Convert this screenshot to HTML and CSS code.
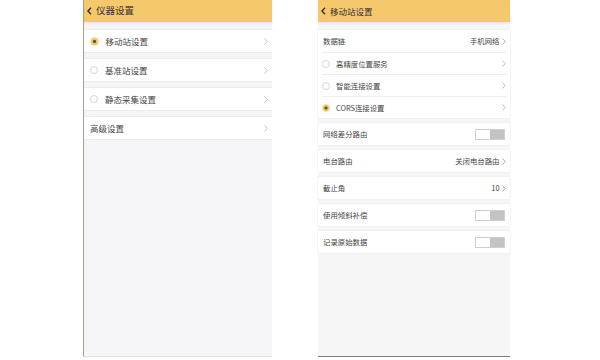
FILE: index.html
```html
<!DOCTYPE html>
<html>
<head>
<meta charset="utf-8">
<link rel="stylesheet" href="styles.css">
</head>
<body>
<div class="stage">
  <div class="phone phone-left">
    <div class="header">
      <svg class="back" width="5" height="8" viewBox="0 0 5 8"><polyline points="4,0.8 1,4 4,7.2" fill="none" stroke="#333" stroke-width="1.5"/></svg>
      <span>仪器设置</span>
    </div>
    <div class="list">
      <div class="row"><span class="radio on"></span><span class="label">移动站设置</span><span class="chev"><svg width="4" height="7" viewBox="0 0 4 7"><polyline points="0.5,0.5 3.3,3.5 0.5,6.5" fill="none" stroke="#b0b0b0" stroke-width="0.8"/></svg></span></div>
      <div class="row"><span class="radio"></span><span class="label">基准站设置</span><span class="chev"><svg width="4" height="7" viewBox="0 0 4 7"><polyline points="0.5,0.5 3.3,3.5 0.5,6.5" fill="none" stroke="#b0b0b0" stroke-width="0.8"/></svg></span></div>
      <div class="row"><span class="radio"></span><span class="label">静态采集设置</span><span class="chev"><svg width="4" height="7" viewBox="0 0 4 7"><polyline points="0.5,0.5 3.3,3.5 0.5,6.5" fill="none" stroke="#b0b0b0" stroke-width="0.8"/></svg></span></div>
      <div class="row"><span class="label plain">高级设置</span><span class="chev"><svg width="4" height="7" viewBox="0 0 4 7"><polyline points="0.5,0.5 3.3,3.5 0.5,6.5" fill="none" stroke="#b0b0b0" stroke-width="0.8"/></svg></span></div>
    </div>
  </div>

  <div class="phone phone-right">
    <div class="header">
      <svg class="back" width="5" height="8" viewBox="0 0 5 8"><polyline points="4,0.8 1,4 4,7.2" fill="none" stroke="#333" stroke-width="1.4"/></svg>
      <span>移动站设置</span>
    </div>
    <div class="list">
      <div class="group">
        <div class="row"><span class="label plain">数据链</span><span class="value">手机网络</span><span class="chev"><svg width="4" height="7" viewBox="0 0 4 7"><polyline points="0.5,0.5 3.3,3.5 0.5,6.5" fill="none" stroke="#999" stroke-width="0.8"/></svg></span></div>
        <div class="row"><span class="radio"></span><span class="label">高精度位置服务</span><span class="chev"><svg width="4" height="7" viewBox="0 0 4 7"><polyline points="0.5,0.5 3.3,3.5 0.5,6.5" fill="none" stroke="#b0b0b0" stroke-width="0.8"/></svg></span></div>
        <div class="row"><span class="radio"></span><span class="label">智能连接设置</span><span class="chev"><svg width="4" height="7" viewBox="0 0 4 7"><polyline points="0.5,0.5 3.3,3.5 0.5,6.5" fill="none" stroke="#b0b0b0" stroke-width="0.8"/></svg></span></div>
        <div class="row"><span class="radio on"></span><span class="label">CORS连接设置</span><span class="chev"><svg width="4" height="7" viewBox="0 0 4 7"><polyline points="0.5,0.5 3.3,3.5 0.5,6.5" fill="none" stroke="#b0b0b0" stroke-width="0.8"/></svg></span></div>
      </div>
      <div class="group">
        <div class="row"><span class="label plain">网络差分路由</span><span class="switch"><span class="knob"></span></span></div>
      </div>
      <div class="group">
        <div class="row"><span class="label plain">电台路由</span><span class="value">关闭电台路由</span><span class="chev"><svg width="4" height="7" viewBox="0 0 4 7"><polyline points="0.5,0.5 3.3,3.5 0.5,6.5" fill="none" stroke="#999" stroke-width="0.8"/></svg></span></div>
      </div>
      <div class="group">
        <div class="row"><span class="label plain">截止角</span><span class="value">10</span><span class="chev"><svg width="4" height="7" viewBox="0 0 4 7"><polyline points="0.5,0.5 3.3,3.5 0.5,6.5" fill="none" stroke="#999" stroke-width="0.8"/></svg></span></div>
      </div>
      <div class="group">
        <div class="row"><span class="label plain">使用倾斜补偿</span><span class="switch"><span class="knob"></span></span></div>
      </div>
      <div class="group">
        <div class="row"><span class="label plain">记录原始数据</span><span class="switch"><span class="knob"></span></span></div>
      </div>
    </div>
  </div>
</div>
</body>
</html>
```

FILE: styles.css
```css
html, body {
  margin: 0;
  padding: 0;
  background: #ffffff;
}
body {
  font-family: "Noto Sans CJK SC", "Noto Sans", sans-serif;
  color: #333;
}
.stage {
  display: flex;
  align-items: flex-start;
  padding-left: 83px;
  gap: 46px;
  height: 360px;
}
.phone {
  height: 357px;
  display: flex;
  flex-direction: column;
  box-sizing: border-box;
}
.phone-left {
  width: 189px;
  background: #f5f4f7;
  border-left: 1px solid #9aa596;
  border-bottom: 1px solid #e2eadb;
}
.phone-right {
  width: 192px;
  background: #f6f6f6;
  border-bottom: 1px solid #7a7a7a;
}
.header {
  height: 22px;
  background: #f6c86c;
  display: flex;
  align-items: center;
  box-shadow: 0 1px 3px rgba(0,0,0,0.08);
  position: relative;
  z-index: 1;
}
.phone-left .header {
  padding-left: 3px;
  font-size: 9.5px;
  gap: 4px;
}
.phone-right .header {
  padding-left: 3px;
  font-size: 8.5px;
  gap: 4px;
}
.header span {
  color: #333;
  line-height: 1;
}
.back {
  display: block;
}
.list {
  display: flex;
  flex-direction: column;
}
.row {
  display: flex;
  align-items: center;
  background: #fff;
  box-sizing: border-box;
}
.label {
  line-height: 1;
}
.chev {
  display: flex;
  align-items: center;
}
.chev svg {
  display: block;
}

/* left phone */
.phone-left .list {
  padding-top: 7px;
  gap: 5px;
}
.phone-left .row {
  height: 24px;
  padding: 0 4px 0 6px;
  font-size: 8.5px;
  border-top: 1px solid #ececec;
  border-bottom: 1px solid #ececec;
}
.phone-left .label {
  flex: 1;
  margin-left: 7px;
  color: #444;
}
.phone-left .label.plain {
  margin-left: 0;
}
.radio {
  width: 8px;
  height: 8px;
  border-radius: 50%;
  border: 0.8px solid #d6d6d6;
  box-sizing: border-box;
  background: #fff;
  flex: none;
}
.radio.on {
  border: 1px solid #f8dc9a;
  background: radial-gradient(circle, #555 0, #555 1.3px, #f3c35c 1.8px, #f3c35c 100%);
}
.phone-left .radio.on {
  width: 9px;
  height: 9px;
  margin-left: -0.5px;
}

/* right phone */
.phone-right .list {
  padding-top: 8px;
  gap: 5px;
}
.phone-right .group {
  background: #fff;
  display: flex;
  flex-direction: column;
  padding: 0 4px;
  box-shadow: 0 0 0 0.5px #ebebeb;
}
.phone-right .row {
  height: 22px;
  padding: 0;
  font-size: 7.4px;
}
.phone-right .group .row + .row {
  border-top: 0.6px solid #eeeeee;
}
.phone-right .label {
  flex: 1;
  margin-left: 6px;
  color: #444;
}
.phone-right .label.plain {
  margin-left: 1px;
}
.value {
  font-size: 7.4px;
  color: #444;
  margin-right: 2.5px;
  line-height: 1;
}
.switch {
  width: 30px;
  height: 11px;
  box-sizing: border-box;
  border: 1px solid #cfcfcf;
  background: #c3c3c3;
  display: flex;
  margin-right: 1px;
}
.knob {
  width: 14px;
  height: 100%;
  background: #fff;
}
```
